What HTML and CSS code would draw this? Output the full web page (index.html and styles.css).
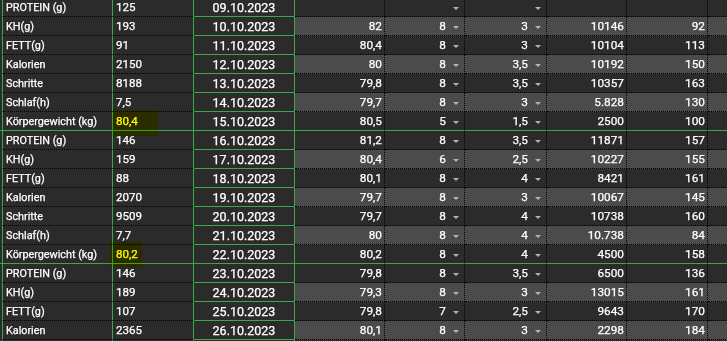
FILE: index.html
```html
<!DOCTYPE html>
<html lang="de">
<head>
<meta charset="utf-8">
<link rel="stylesheet" href="styles.css">
</head>
<body>
<div class="sheet">
  <!-- row 0 -->
  <div class="c sp"></div><div class="c lab">PROTEIN (g)</div><div class="c val">125</div><div class="c date">09.10.2023</div>
  <div class="c num d"></div><div class="c dd d"><i></i></div><div class="c dd d"><i></i></div><div class="c num d"></div><div class="c num d"></div><div class="c d last"></div>
  <!-- row 1 -->
  <div class="c sp"></div><div class="c lab">KH(g)</div><div class="c val">193</div><div class="c date">10.10.2023</div>
  <div class="c num g">82</div><div class="c dd g">8<i></i></div><div class="c dd g">3<i></i></div><div class="c num g">10146</div><div class="c num g">92</div><div class="c g last"></div>
  <!-- row 2 -->
  <div class="c sp"></div><div class="c lab">FETT(g)</div><div class="c val">91</div><div class="c date">11.10.2023</div>
  <div class="c num d">80,4</div><div class="c dd d">8<i></i></div><div class="c dd d">3<i></i></div><div class="c num d">10104</div><div class="c num d">113</div><div class="c d last"></div>
  <!-- row 3 -->
  <div class="c sp"></div><div class="c lab">Kalorien</div><div class="c val">2150</div><div class="c date">12.10.2023</div>
  <div class="c num g">80</div><div class="c dd g">8<i></i></div><div class="c dd g">3,5<i></i></div><div class="c num g">10192</div><div class="c num g">150</div><div class="c g last"></div>
  <!-- row 4 -->
  <div class="c sp"></div><div class="c lab">Schritte</div><div class="c val">8188</div><div class="c date">13.10.2023</div>
  <div class="c num d">79,8</div><div class="c dd d">8<i></i></div><div class="c dd d">3,5<i></i></div><div class="c num d">10357</div><div class="c num d">163</div><div class="c d last"></div>
  <!-- row 5 -->
  <div class="c sp"></div><div class="c lab">Schlaf(h)</div><div class="c val">7,5</div><div class="c date">14.10.2023</div>
  <div class="c num g">79,7</div><div class="c dd g">8<i></i></div><div class="c dd g">3<i></i></div><div class="c num g">5.828</div><div class="c num g">130</div><div class="c g last"></div>
  <!-- row 6 -->
  <div class="c sp wk"></div><div class="c lab wk">Körpergewicht (kg)</div><div class="c val wk"><span class="mark m1"></span><span class="hl">80,4</span></div><div class="c date">15.10.2023</div>
  <div class="c num d wk">80,5</div><div class="c dd d wk">5<i></i></div><div class="c dd d wk">1,5<i></i></div><div class="c num d wk">2500</div><div class="c num d wk">100</div><div class="c d last wk"></div>
  <!-- row 7 -->
  <div class="c sp"></div><div class="c lab">PROTEIN (g)</div><div class="c val">146</div><div class="c date">16.10.2023</div>
  <div class="c num d">81,2</div><div class="c dd d">8<i></i></div><div class="c dd d">3,5<i></i></div><div class="c num d">11871</div><div class="c num d">157</div><div class="c d last"></div>
  <!-- row 8 -->
  <div class="c sp"></div><div class="c lab">KH(g)</div><div class="c val">159</div><div class="c date">17.10.2023</div>
  <div class="c num g">80,4</div><div class="c dd g">6<i></i></div><div class="c dd g">2,5<i></i></div><div class="c num g">10227</div><div class="c num g">155</div><div class="c g last"></div>
  <!-- row 9 -->
  <div class="c sp"></div><div class="c lab">FETT(g)</div><div class="c val">88</div><div class="c date">18.10.2023</div>
  <div class="c num d">80,1</div><div class="c dd d">8<i></i></div><div class="c dd d">4<i></i></div><div class="c num d">8421</div><div class="c num d">161</div><div class="c d last"></div>
  <!-- row 10 -->
  <div class="c sp"></div><div class="c lab">Kalorien</div><div class="c val">2070</div><div class="c date">19.10.2023</div>
  <div class="c num g">79,7</div><div class="c dd g">8<i></i></div><div class="c dd g">3<i></i></div><div class="c num g">10067</div><div class="c num g">145</div><div class="c g last"></div>
  <!-- row 11 -->
  <div class="c sp"></div><div class="c lab">Schritte</div><div class="c val">9509</div><div class="c date">20.10.2023</div>
  <div class="c num d">79,7</div><div class="c dd d">8<i></i></div><div class="c dd d">4<i></i></div><div class="c num d">10738</div><div class="c num d">160</div><div class="c d last"></div>
  <!-- row 12 -->
  <div class="c sp"></div><div class="c lab">Schlaf(h)</div><div class="c val">7,7</div><div class="c date">21.10.2023</div>
  <div class="c num g">80</div><div class="c dd g">8<i></i></div><div class="c dd g">4<i></i></div><div class="c num g">10.738</div><div class="c num g">84</div><div class="c g last"></div>
  <!-- row 13 -->
  <div class="c sp wk"></div><div class="c lab wk">Körpergewicht (kg)</div><div class="c val wk"><span class="mark m2"></span><span class="hl">80,2</span></div><div class="c date">22.10.2023</div>
  <div class="c num d wk">80,2</div><div class="c dd d wk">8<i></i></div><div class="c dd d wk">4<i></i></div><div class="c num d wk">4500</div><div class="c num d wk">158</div><div class="c d last wk"></div>
  <!-- row 14 -->
  <div class="c sp"></div><div class="c lab">PROTEIN (g)</div><div class="c val">146</div><div class="c date">23.10.2023</div>
  <div class="c num d">79,8</div><div class="c dd d">8<i></i></div><div class="c dd d">3,5<i></i></div><div class="c num d">6500</div><div class="c num d">136</div><div class="c d last"></div>
  <!-- row 15 -->
  <div class="c sp"></div><div class="c lab">KH(g)</div><div class="c val">189</div><div class="c date">24.10.2023</div>
  <div class="c num g">79,3</div><div class="c dd g">8<i></i></div><div class="c dd g">3<i></i></div><div class="c num g">13015</div><div class="c num g">161</div><div class="c g last"></div>
  <!-- row 16 -->
  <div class="c sp"></div><div class="c lab">FETT(g)</div><div class="c val">107</div><div class="c date">25.10.2023</div>
  <div class="c num d">79,8</div><div class="c dd d">7<i></i></div><div class="c dd d">2,5<i></i></div><div class="c num d">9643</div><div class="c num d">170</div><div class="c d last"></div>
  <!-- row 17 -->
  <div class="c sp"></div><div class="c lab">Kalorien</div><div class="c val">2365</div><div class="c date">26.10.2023</div>
  <div class="c num g">80,1</div><div class="c dd g">8<i></i></div><div class="c dd g">3<i></i></div><div class="c num g">2298</div><div class="c num g">184</div><div class="c g last"></div>
  <!-- row 18 (only its top edge is visible) -->
  <div class="c sp"></div><div class="c lab"></div><div class="c val"></div><div class="c date"></div>
  <div class="c num d"></div><div class="c dd d"></div><div class="c dd d"></div><div class="c num d"></div><div class="c num d"></div><div class="c d last"></div>
</div>
</body>
</html>
```

FILE: styles.css
```css
html, body {
  margin: 0;
  padding: 0;
  background: #2b2b2b;
  overflow: hidden;
  height: 341px;
}

.sheet {
  margin-top: -2px;
  display: grid;
  grid-template-columns: 3px 110px 81px 101px 90px 80px 82px 80px 81px 40px;
  grid-auto-rows: 19px;
  font-family: Roboto, "Liberation Sans", sans-serif;
  color: #ffffff;
  -webkit-text-stroke: 0.25px #ffffff;
}

.c {
  box-sizing: border-box;
  border-right: 1px dotted #000;
  border-bottom: 1px dotted #000;
  background: #2b2b2b;
  display: flex;
  align-items: center;
  white-space: nowrap;
  position: relative;
}

.sp {
  border-right: 1px solid #3aa845;
  border-bottom: 1px solid transparent;
}

.lab {
  font-size: 10.8px;
  padding-left: 3px;
  border-right: 1px solid #3aa845;
}

.val {
  font-size: 11.6px;
  padding-left: 3px;
  border-right: 1px solid #3aa845;
}

.date {
  font-size: 12.5px;
  justify-content: center;
  border-right: 1px solid #3aa845;
  border-bottom: 1px solid #3aa845;
  padding-top: 1px;
}

.num {
  font-size: 11.8px;
  justify-content: flex-end;
  padding-right: 2px;
}

.dd {
  font-size: 11.8px;
  justify-content: flex-end;
  padding-right: 5px;
}

.dd i {
  display: block;
  width: 0;
  height: 0;
  margin-left: 7px;
  margin-top: 2px;
  border-left: 3px solid transparent;
  border-right: 3px solid transparent;
  border-top: 3px solid #b4b4b4;
}

.g { background: #4b4b4b; }
.d { background: #2b2b2b; }

.last { border-right: none; }

.wk { border-bottom: 1px solid #3aa845; }

.hl {
  position: relative;
  z-index: 1;
}

.mark {
  position: absolute;
  z-index: 2;
  background: #ffff00;
  mix-blend-mode: multiply;
  filter: blur(0.6px);
}

.m1 { left: -1px; top: -2px; width: 46px; height: 26px; }
.m2 { left: -3px; top: -3px; width: 32px; height: 25px; }
```
